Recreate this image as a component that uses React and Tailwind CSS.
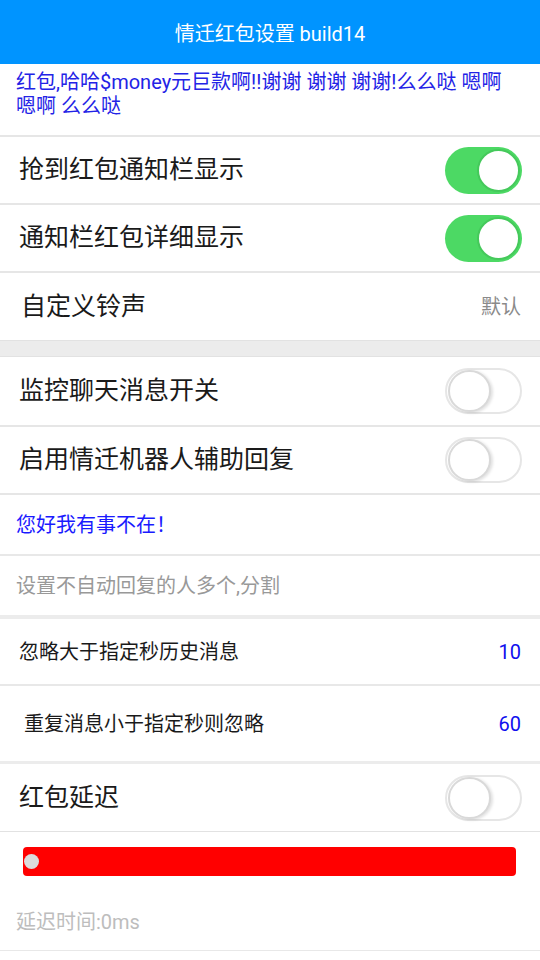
import React from 'react'

const font = { fontFamily: 'Roboto, "Noto Sans CJK SC", "Noto Sans", sans-serif' }

function Toggle({ on }) {
  if (on) {
    return (
      <div className="w-[77px] h-[47px] rounded-full bg-[#4cd964] flex items-center justify-end pr-[2px]">
        <div className="w-[43px] h-[43px] rounded-full bg-white border-2 border-[#45c95b]" />
      </div>
    )
  }
  return (
    <div className="w-[77px] h-[46px] rounded-full bg-white border-2 border-[#e6e6e6] flex items-center pl-[1px]">
      <div className="w-[43px] h-[42px] rounded-full bg-white border-2 border-[#d9d9d9] shadow-[2px_1px_3px_rgba(0,0,0,0.12)]" />
    </div>
  )
}

function SwitchRow({ label, on, h = 'h-[68px]' }) {
  return (
    <div className={`${h} flex items-center justify-between pl-[19px] pr-[18px] border-b-2 border-[#e6e6e6]`}>
      <span className="text-[25px] text-[#1a1a1a]">{label}</span>
      <Toggle on={on} />
    </div>
  )
}

function ValueRow({ label, value, pl, h }) {
  return (
    <div className={`${h} flex items-center justify-between ${pl} pr-[19px]`}>
      <span className="text-[20px] text-[#1a1a1a]">{label}</span>
      <span className="text-[20px] text-[#1010ee]">{value}</span>
    </div>
  )
}

export default function App() {
  return (
    <div className="w-[540px] h-[960px] bg-white overflow-hidden" style={font}>
      <div className="h-16 bg-[#0094ff] flex items-center justify-center">
        <span className="text-white text-[20px] pt-[4px]">情迁红包设置 build14</span>
      </div>

      <div className="h-[73px] px-4 pt-[6px] text-[20px] leading-[24px] text-[#2323e6] border-b-2 border-[#e6e6e6]">
        <div className="whitespace-nowrap">红包,哈哈$money元巨款啊!!谢谢 谢谢 谢谢!么么哒 嗯啊</div>
        <div>嗯啊 么么哒</div>
      </div>

      <SwitchRow label="抢到红包通知栏显示" on />
      <SwitchRow label="通知栏红包详细显示" on />
      <div className="h-[67px] flex items-center justify-between pl-[21px] pr-[19px]">
        <span className="text-[25px] text-[#1a1a1a]">自定义铃声</span>
        <span className="text-[20px] text-[#8a8a8a]">默认</span>
      </div>

      <div className="h-[17px] bg-[#ececec] border-y border-[#e2e2e2]" />

      <SwitchRow label="监控聊天消息开关" h="h-[70px]" />
      <SwitchRow label="启用情迁机器人辅助回复" h="h-[68px]" />

      <div className="h-[61px] flex items-center px-4 border-b-2 border-[#e8e8e8]">
        <span className="text-[20px] text-[#1a1aff]">您好我有事不在！</span>
      </div>
      <div className="h-[59px] flex items-center px-4">
        <span className="text-[20px] text-[#999999]">设置不自动回复的人多个,分割</span>
      </div>
      <div className="h-[4px] bg-[#ececec]" />

      <div className="border-b-2 border-[#e8e8e8]">
        <ValueRow label="忽略大于指定秒历史消息" value="10" pl="pl-[19px]" h="h-[65px]" />
      </div>
      <ValueRow label="重复消息小于指定秒则忽略" value="60" pl="pl-[24px]" h="h-[75px]" />
      <div className="h-[3px] bg-[#ececec]" />

      <div className="h-[68px] flex items-center justify-between pl-[19px] pr-[18px] border-b border-[#e2e2e2]">
        <span className="text-[25px] text-[#1a1a1a]">红包延迟</span>
        <Toggle />
      </div>

      <div className="pl-[23px] pt-[15px] pr-[24px]">
        <div className="h-[29px] bg-[#ff0000] rounded-[4px] flex items-center pl-[1px]">
          <div className="w-[15px] h-[15px] rounded-full bg-[#dcdcdc]" />
        </div>
      </div>
      <div className="h-[75px] flex items-end px-4 pb-[14px] border-b border-[#e8e8e8]">
        <span className="text-[20px] leading-[27px] text-[#bdbdbd]">延迟时间:0ms</span>
      </div>
    </div>
  )
}
